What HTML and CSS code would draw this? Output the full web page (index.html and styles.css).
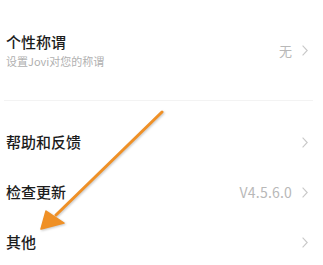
FILE: index.html
```html
<!DOCTYPE html>
<html lang="zh-CN">
<head>
<meta charset="utf-8">
<link rel="stylesheet" href="styles.css">
</head>
<body>
<div class="page">
  <div class="row row-top">
    <div class="texts">
      <div class="title">个性称谓</div>
      <div class="sub">设置Jovi对您的称谓</div>
    </div>
    <div class="right"><span class="value">无</span><svg class="chev" viewBox="0 0 6 11" width="6" height="11"><path d="M0.6 0.6 L5.2 5.5 L0.6 10.4" fill="none" stroke="#c8c8c8" stroke-width="1.1"/></svg></div>
  </div>
  <div class="divider"></div>
  <div class="list">
    <div class="row"><div class="title">帮助和反馈</div><div class="right"><svg class="chev" viewBox="0 0 6 11" width="6" height="11"><path d="M0.6 0.6 L5.2 5.5 L0.6 10.4" fill="none" stroke="#c8c8c8" stroke-width="1.1"/></svg></div></div>
    <div class="row"><div class="title">检查更新</div><div class="right"><span class="value ver">V4.5.6.0</span><svg class="chev" viewBox="0 0 6 11" width="6" height="11"><path d="M0.6 0.6 L5.2 5.5 L0.6 10.4" fill="none" stroke="#c8c8c8" stroke-width="1.1"/></svg></div></div>
    <div class="row"><div class="title">其他</div><div class="right"><svg class="chev" viewBox="0 0 6 11" width="6" height="11"><path d="M0.6 0.6 L5.2 5.5 L0.6 10.4" fill="none" stroke="#c8c8c8" stroke-width="1.1"/></svg></div></div>
  </div>
  <svg class="arrow" viewBox="0 0 323 265" width="323" height="265">
    <line x1="162" y1="112" x2="56" y2="215" stroke="#ef9026" stroke-width="3" stroke-linecap="round"/>
    <path d="M41 229 L46 211 L55 217 L64 223 Z" fill="#ef9026" stroke="#ef9026" stroke-width="1.5" stroke-linejoin="round"/>
  </svg>
</div>
</body>
</html>
```
FILE: styles.css
```css
html, body {
  margin: 0;
  padding: 0;
  background: #ffffff;
}
body {
  font-family: "Noto Sans CJK SC", "Noto Sans", sans-serif;
}
.page {
  position: relative;
  width: 323px;
  height: 265px;
  overflow: hidden;
}
.row {
  display: flex;
  align-items: center;
  justify-content: space-between;
  padding: 0 15px 0 6px;
  height: 50px;
}
.row-top {
  height: auto;
  padding-top: 32px;
  padding-bottom: 31px;
}
.texts {
  display: flex;
  flex-direction: column;
}
.title {
  font-size: 15px;
  line-height: 20px;
  font-weight: 500;
  color: #1c1c1c;
}
.sub {
  font-size: 11px;
  line-height: 16px;
  color: #b0b0b0;
  margin-top: 1px;
}
.right {
  display: flex;
  align-items: center;
  gap: 10px;
}
.value {
  font-size: 13px;
  line-height: 18px;
  color: #b8b8b8;
}
.ver {
  font-size: 14px;
  letter-spacing: 0.2px;
}
.chev {
  display: block;
}
.divider {
  height: 1px;
  background: #f3f3f3;
  margin: 0 10px 0 4px;
}
.list {
  padding-top: 16px;
}
.arrow {
  position: absolute;
  left: 0;
  top: 0;
  filter: drop-shadow(1px 1px 0.8px rgba(0, 0, 0, 0.22));
}
```
